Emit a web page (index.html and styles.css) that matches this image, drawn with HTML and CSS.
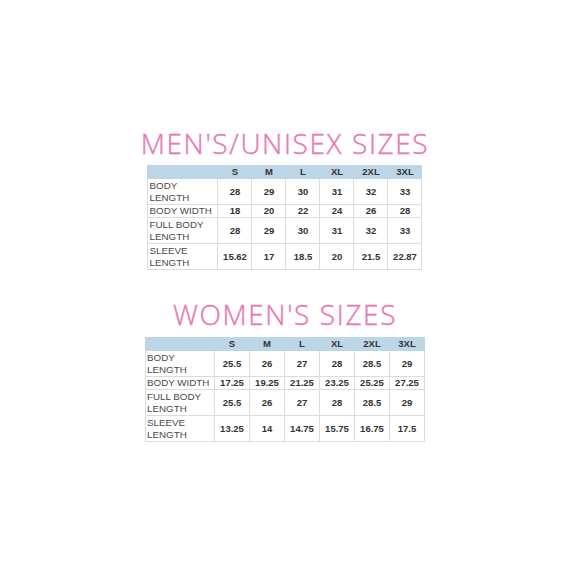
FILE: index.html
```html
<!DOCTYPE html>
<html>
<head>
<meta charset="utf-8">
<link rel="stylesheet" href="styles.css">
</head>
<body>
<div class="page">
  <section class="chart chart-men">
    <h1 class="title">MEN'S/UNISEX SIZES</h1>
    <table class="sizes">
      <tr class="head"><th></th><th>S</th><th>M</th><th>L</th><th>XL</th><th>2XL</th><th>3XL</th></tr>
      <tr class="tall"><td class="label">BODY<br>LENGTH</td><td>28</td><td>29</td><td>30</td><td>31</td><td>32</td><td>33</td></tr>
      <tr class="short"><td class="label">BODY WIDTH</td><td>18</td><td>20</td><td>22</td><td>24</td><td>26</td><td>28</td></tr>
      <tr class="tall"><td class="label">FULL BODY<br>LENGTH</td><td>28</td><td>29</td><td>30</td><td>31</td><td>32</td><td>33</td></tr>
      <tr class="tall"><td class="label">SLEEVE<br>LENGTH</td><td>15.62</td><td>17</td><td>18.5</td><td>20</td><td>21.5</td><td>22.87</td></tr>
    </table>
  </section>
  <section class="chart chart-women">
    <h1 class="title">WOMEN'S SIZES</h1>
    <table class="sizes">
      <tr class="head"><th></th><th>S</th><th>M</th><th>L</th><th>XL</th><th>2XL</th><th>3XL</th></tr>
      <tr class="tall"><td class="label">BODY<br>LENGTH</td><td>25.5</td><td>26</td><td>27</td><td>28</td><td>28.5</td><td>29</td></tr>
      <tr class="short"><td class="label">BODY WIDTH</td><td>17.25</td><td>19.25</td><td>21.25</td><td>23.25</td><td>25.25</td><td>27.25</td></tr>
      <tr class="tall"><td class="label">FULL BODY<br>LENGTH</td><td>25.5</td><td>26</td><td>27</td><td>28</td><td>28.5</td><td>29</td></tr>
      <tr class="tall"><td class="label">SLEEVE<br>LENGTH</td><td>13.25</td><td>14</td><td>14.75</td><td>15.75</td><td>16.75</td><td>17.5</td></tr>
    </table>
  </section>
</div>
</body>
</html>
```
FILE: styles.css
```css
html, body {
  margin: 0;
  padding: 0;
  background: #ffffff;
}
.page {
  width: 570px;
  height: 570px;
  display: flex;
  flex-direction: column;
  align-items: center;
  padding-top: 127px;
  box-sizing: border-box;
  font-family: "Liberation Sans", Arial, sans-serif;
}
.chart {
  display: flex;
  flex-direction: column;
  align-items: center;
}
.chart-women {
  margin-top: 28px;
}
.title {
  margin: 0 0 6px 0;
  font-family: "Open Sans", "Lato", sans-serif;
  font-weight: 300;
  font-size: 28px;
  line-height: 32px;
  letter-spacing: 1.6px;
  color: #e877b4;
  -webkit-text-stroke: 0.35px #e877b4;
  white-space: nowrap;
}
.chart-women .title {
  margin-bottom: 7px;
}
.sizes {
  border-collapse: collapse;
  table-layout: fixed;
}
.sizes th, .sizes td {
  border: 1px solid #dcdcdc;
  padding: 0;
  text-align: center;
  vertical-align: middle;
  font-size: 9.5px;
  font-weight: bold;
  color: #333;
}
.sizes th {
  background: #bcd6e8;
  border-color: #bcd6e8;
  height: 12px;
  line-height: 12px;
}
.chart-men .sizes th, .chart-men .sizes td { width: 33px; }
.chart-men .sizes th:first-child, .chart-men .sizes td.label { width: 68px; }
.chart-women .sizes th, .chart-women .sizes td { width: 34px; }
.chart-women .sizes th:first-child, .chart-women .sizes td.label { width: 67px; }
.sizes td.label {
  text-align: left;
  font-weight: normal;
  font-size: 9.8px;
  color: #4a4a4a;
  line-height: 12px;
  padding-left: 1px;
}
.sizes tr.tall td { height: 25px; }
.sizes tr.short td { height: 12px; line-height: 12px; }
```
